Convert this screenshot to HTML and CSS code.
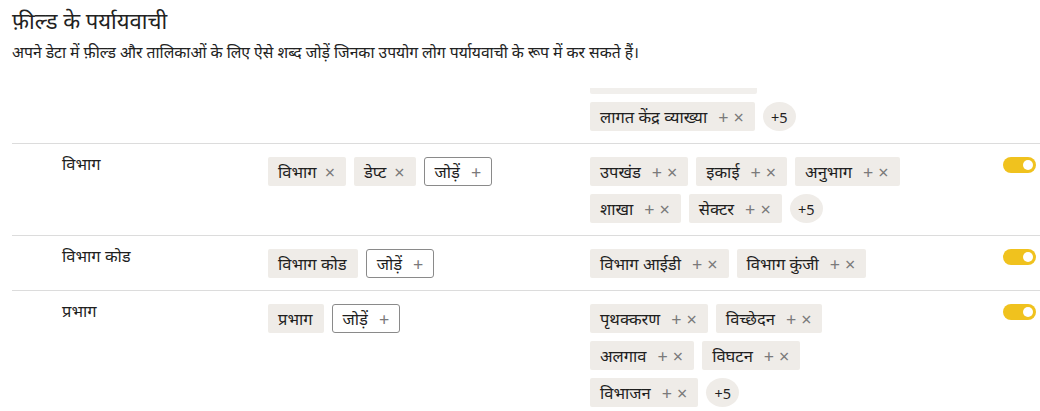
FILE: index.html
```html
<!DOCTYPE html>
<html lang="hi">
<head>
<meta charset="utf-8">
<link rel="stylesheet" href="styles.css">
</head>
<body>
<div class="page">
  <header class="head">
    <h1 class="title">फ़ील्ड के पर्यायवाची</h1>
    <p class="sub">अपने डेटा में फ़ील्ड और तालिकाओं के लिए ऐसे शब्द जोड़ें जिनका उपयोग लोग पर्यायवाची के रूप में कर सकते हैं।</p>
  </header>

  <div class="row row-partial">
    <div class="label"></div>
    <div class="mid"></div>
    <div class="partial">
      <div class="chip-edge"></div>
      <div class="chips">
        <span class="chip">लागत केंद्र व्याख्या <span class="op">+</span><span class="op">×</span></span>
        <span class="more">+5</span>
      </div>
    </div>
    <div class="tg"></div>
  </div>

  <div class="row">
    <div class="label">विभाग</div>
    <div class="mid chips">
      <span class="chip">विभाग <span class="op">×</span></span>
      <span class="chip">डेप्ट <span class="op">×</span></span>
      <span class="add">जोड़ें <span class="op">+</span></span>
    </div>
    <div class="chips">
      <span class="chip">उपखंड <span class="op">+</span><span class="op">×</span></span>
      <span class="chip">इकाई <span class="op">+</span><span class="op">×</span></span>
      <span class="chip">अनुभाग <span class="op">+</span><span class="op">×</span></span>
      <span class="chip">शाखा <span class="op">+</span><span class="op">×</span></span>
      <span class="chip">सेक्टर <span class="op">+</span><span class="op">×</span></span>
      <span class="more">+5</span>
    </div>
    <div class="tg"><span class="toggle"></span></div>
  </div>

  <div class="row">
    <div class="label">विभाग कोड</div>
    <div class="mid chips">
      <span class="chip">विभाग कोड</span>
      <span class="add">जोड़ें <span class="op">+</span></span>
    </div>
    <div class="chips">
      <span class="chip">विभाग आईडी <span class="op">+</span><span class="op">×</span></span>
      <span class="chip">विभाग कुंजी <span class="op">+</span><span class="op">×</span></span>
    </div>
    <div class="tg"><span class="toggle"></span></div>
  </div>

  <div class="row">
    <div class="label">प्रभाग</div>
    <div class="mid chips">
      <span class="chip">प्रभाग</span>
      <span class="add">जोड़ें <span class="op">+</span></span>
    </div>
    <div class="chips">
      <span class="chip">पृथक्करण <span class="op">+</span><span class="op">×</span></span>
      <span class="chip">विच्छेदन <span class="op">+</span><span class="op">×</span></span>
      <span class="chip">अलगाव <span class="op">+</span><span class="op">×</span></span>
      <span class="chip">विघटन <span class="op">+</span><span class="op">×</span></span>
      <span class="chip">विभाजन <span class="op">+</span><span class="op">×</span></span>
      <span class="more">+5</span>
    </div>
    <div class="tg"><span class="toggle"></span></div>
  </div>
</div>
</body>
</html>
```
FILE: styles.css
```css
html, body {
  margin: 0;
  padding: 0;
  background: #ffffff;
  overflow: hidden;
}
body {
  font-family: "Noto Sans", "Noto Sans Devanagari", sans-serif;
  color: #1f1f1f;
}
.page {
  padding: 0 0 0 12px;
  height: 411px;
  overflow: hidden;
}
.head {
  padding-top: 2px;
}
.title {
  margin: 0;
  font-size: 22px;
  font-weight: 400;
  line-height: 36px;
  color: #222;
}
.sub {
  margin: 0;
  font-size: 15.7px;
  line-height: 28px;
  color: #222;
}
.row {
  display: grid;
  grid-template-columns: 206px 322px 1fr 36px;
  padding: 13px 4px 12px 50px;
  border-top: 1px solid #dcdcdc;
}
.row-partial {
  border-top: none;
  padding-top: 22px;
}
.partial .chips {
  margin-top: 8px;
}
.label {
  font-size: 16.5px;
  line-height: 29px;
  margin-top: -8px;
}
.chips {
  display: flex;
  flex-wrap: wrap;
  gap: 8px 8px;
  align-content: flex-start;
  max-width: 322px;
}
.chip-edge {
  width: 167px;
  height: 6px;
  background: #f1efec;
  border-radius: 0 0 2px 2px;
}
.chip {
  display: inline-flex;
  align-items: center;
  height: 29px;
  padding: 0 11px 0 10px;
  background: #efece8;
  border-radius: 2px;
  font-size: 16.5px;
  white-space: nowrap;
}
.op {
  color: #7a7a7a;
  font-size: 18px;
  line-height: 1;
  margin-left: 11px;
}
.op + .op {
  margin-left: 5px;
}
.chip .op:only-child {
  margin-left: 8px;
}
.add {
  display: inline-flex;
  align-items: center;
  height: 27px;
  padding: 0 10px 0 10px;
  border: 1px solid #8a8a8a;
  border-radius: 3px;
  font-size: 16.5px;
  white-space: nowrap;
  background: #fff;
}
.more {
  display: inline-flex;
  align-items: center;
  justify-content: center;
  width: 33px;
  height: 29px;
  border-radius: 50%;
  background: #efece8;
  font-size: 14.5px;
}
.tg {
  display: flex;
  justify-content: flex-end;
  align-items: flex-start;
}
.toggle {
  position: relative;
  width: 33px;
  height: 16px;
  border-radius: 8px;
  background: #f0c21e;
}
.toggle::after {
  content: "";
  position: absolute;
  right: 3px;
  top: 3px;
  width: 10px;
  height: 10px;
  border-radius: 50%;
  background: #fff;
}
```
